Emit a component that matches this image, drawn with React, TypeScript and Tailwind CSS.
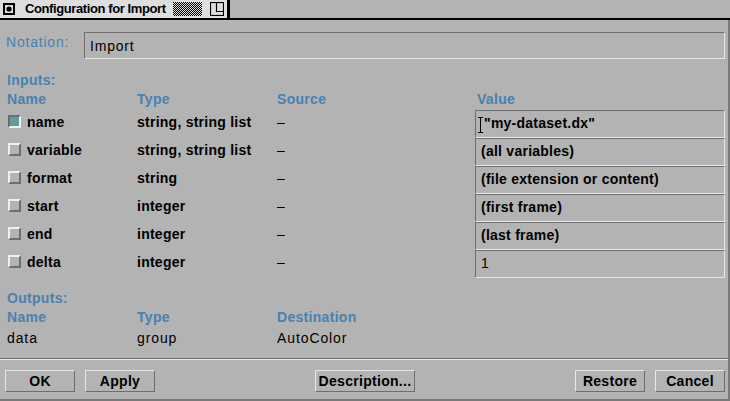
import React from "react";

const DARK = "#6e6e6e";

function Check({ on }: { on?: boolean }) {
  return on ? (
    <div className="w-[13px] h-[13px] shrink-0 border-2 border-t-[#6e6e6e] border-l-[#6e6e6e] border-b-[#f0f0f0] border-r-[#f0f0f0] bg-[#5f9ea0]" />
  ) : (
    <div className="w-[13px] h-[13px] shrink-0 border-2 border-t-[#f0f0f0] border-l-[#f0f0f0] border-b-[#6e6e6e] border-r-[#6e6e6e] bg-[#b3b3b3]" />
  );
}

const rows: { name: string; type: string; value: string; on?: boolean; cursor?: boolean; regular?: boolean }[] = [
  { name: "name", type: "string, string list", value: '"my-dataset.dx"', on: true, cursor: true },
  { name: "variable", type: "string, string list", value: "(all variables)" },
  { name: "format", type: "string", value: "(file extension or content)" },
  { name: "start", type: "integer", value: "(first frame)" },
  { name: "end", type: "integer", value: "(last frame)" },
  { name: "delta", type: "integer", value: "1", regular: true },
];

function Btn({ label, w }: { label: string; w: string }) {
  return (
    <div
      className={`${w} h-[22px] flex items-center justify-center border border-t-[#e8e8e8] border-l-[#e8e8e8] border-b-[#6e6e6e] border-r-[#6e6e6e] text-[14px] font-bold tracking-[0.3px] leading-[16px]`}
    >
      {label}
    </div>
  );
}

export default function App() {
  return (
    <div className="w-[730px] h-[401px] bg-[#b3b3b3] font-['Liberation_Sans',Arial,sans-serif] text-black overflow-hidden flex flex-col">
      {/* title bar */}
      <div className="h-[20px] shrink-0 flex border-b-2 border-black">
        <div className="w-[227px] bg-[#dedede] flex items-center">
          <svg width="12" height="12" viewBox="0 0 12 12" className="ml-[3px] shrink-0">
            <rect x="1" y="1" width="10" height="10" fill="none" stroke="black" strokeWidth="2" />
            <circle cx="6" cy="6" r="2.6" fill="black" />
          </svg>
          <span className="ml-[10px] text-[13px] font-bold tracking-[-0.4px] leading-[16px] whitespace-nowrap w-[140px]">
            Configuration for Import
          </span>
          <svg width="29" height="14" viewBox="0 0 29 14" className="ml-[8px] shrink-0">
            <defs>
              <pattern id="chk" width="2" height="2" patternUnits="userSpaceOnUse">
                <rect width="2" height="2" fill="#dedede" />
                <rect x="0" y="0" width="1" height="1" fill="#000" />
                <rect x="1" y="1" width="1" height="1" fill="#000" />
              </pattern>
            </defs>
            <rect width="29" height="14" fill="url(#chk)" />
          </svg>
          <svg width="14" height="14" viewBox="0 0 14 14" className="ml-[8px] shrink-0">
            <rect x="0.5" y="0.5" width="13" height="13" fill="none" stroke="black" strokeWidth="1.2" />
            <path d="M6.5 0.5 V9.5 H13.5" fill="none" stroke="black" strokeWidth="1.2" />
          </svg>
        </div>
        <div className="w-[3px] bg-black" />
        <div className="flex-1 bg-[#b3b3b3]" />
      </div>

      {/* body */}
      <div className="flex-1 flex flex-col border-r-2 border-b-2 border-[#7a7a7a]">
        {/* Notation */}
        <div className="mt-[12px] flex pl-[6px] pr-[3px]">
          <div className="w-[78px] pt-[2px] text-[14px] leading-[16px] tracking-[0.8px] text-[#4682b4]">Notation:</div>
          <div className="flex-1 h-[27px] border border-t-[#6e6e6e] border-l-[#6e6e6e] border-b-[#e8e8e8] border-r-[#e8e8e8] pl-[5px] pt-[5px] text-[14px] leading-[16px] tracking-[0.8px]">
            Import
          </div>
        </div>

        {/* Inputs */}
        <div className="mt-[13px] pl-[7px] h-[16px] text-[14px] leading-[16px] font-bold tracking-[0.3px] text-[#4682b4]">
          Inputs:
        </div>
        <div className="mt-[3px] h-[16px] pl-[7px] pr-[3px] grid grid-cols-[130px_140px_198px_1fr] text-[14px] leading-[16px] font-bold tracking-[0.3px] text-[#4682b4]">
          <div>Name</div>
          <div>Type</div>
          <div>Source</div>
          <div className="pl-[2px]">Value</div>
        </div>
        <div className="mt-[3px] flex flex-col">
          {rows.map((r) => (
            <div
              key={r.name}
              className="h-[28px] pl-[7px] pr-[3px] grid grid-cols-[130px_140px_198px_1fr] text-[14px] leading-[16px] font-bold tracking-[0.25px]"
            >
              <div className="flex items-center pb-[5px] pl-[1px]">
                <Check on={r.on} />
                <span className="ml-[6px] pt-[1px]">{r.name}</span>
              </div>
              <div className="flex items-center pb-[4px]">{r.type}</div>
              <div className="flex items-center pb-[4px] font-normal">–</div>
              <div className="h-[28px] border border-t-[#6e6e6e] border-l-[#6e6e6e] border-b-[#e8e8e8] border-r-[#e8e8e8] flex items-center pb-[2px] pl-[5px]">
                {r.cursor && (
                  <svg width="6" height="16" viewBox="0 0 6 16" className="shrink-0 -ml-[3px] mr-[0px] mt-[3px]">
                    <path d="M0 0.5 H5 M0 15.5 H5 M2.5 0.5 V15.5" stroke="black" strokeWidth="1" fill="none" />
                  </svg>
                )}
                <span className={r.regular ? "font-normal tracking-[0.8px]" : ""}>{r.value}</span>
              </div>
            </div>
          ))}
        </div>

        {/* Outputs */}
        <div className="mt-[12px] pl-[7px] h-[16px] text-[14px] leading-[16px] font-bold tracking-[0.3px] text-[#4682b4]">
          Outputs:
        </div>
        <div className="mt-[3px] h-[16px] pl-[7px] pr-[3px] grid grid-cols-[130px_140px_198px_1fr] text-[14px] leading-[16px] font-bold tracking-[0.3px] text-[#4682b4]">
          <div>Name</div>
          <div>Type</div>
          <div>Destination</div>
          <div />
        </div>
        <div className="mt-[5px] h-[16px] pl-[7px] pr-[3px] grid grid-cols-[130px_140px_198px_1fr] text-[14px] leading-[16px] tracking-[0.9px]">
          <div>data</div>
          <div>group</div>
          <div>AutoColor</div>
          <div />
        </div>

        {/* separator */}
        <div className="mt-[12px] h-[2px] border-t border-t-[#6e6e6e] border-b border-b-[#e8e8e8]" />

        {/* buttons */}
        <div className="mt-[10px] pl-[5px] pr-[3px] grid grid-cols-[1fr_auto_1fr] items-center">
          <div className="flex gap-[10px]">
            <Btn label="OK" w="w-[70px]" />
            <Btn label="Apply" w="w-[70px]" />
          </div>
          <Btn label="Description..." w="w-[100px]" />
          <div className="flex gap-[10px] justify-end">
            <Btn label="Restore" w="w-[70px]" />
            <Btn label="Cancel" w="w-[70px]" />
          </div>
        </div>
        <div className="flex-1" />
      </div>
    </div>
  );
}
